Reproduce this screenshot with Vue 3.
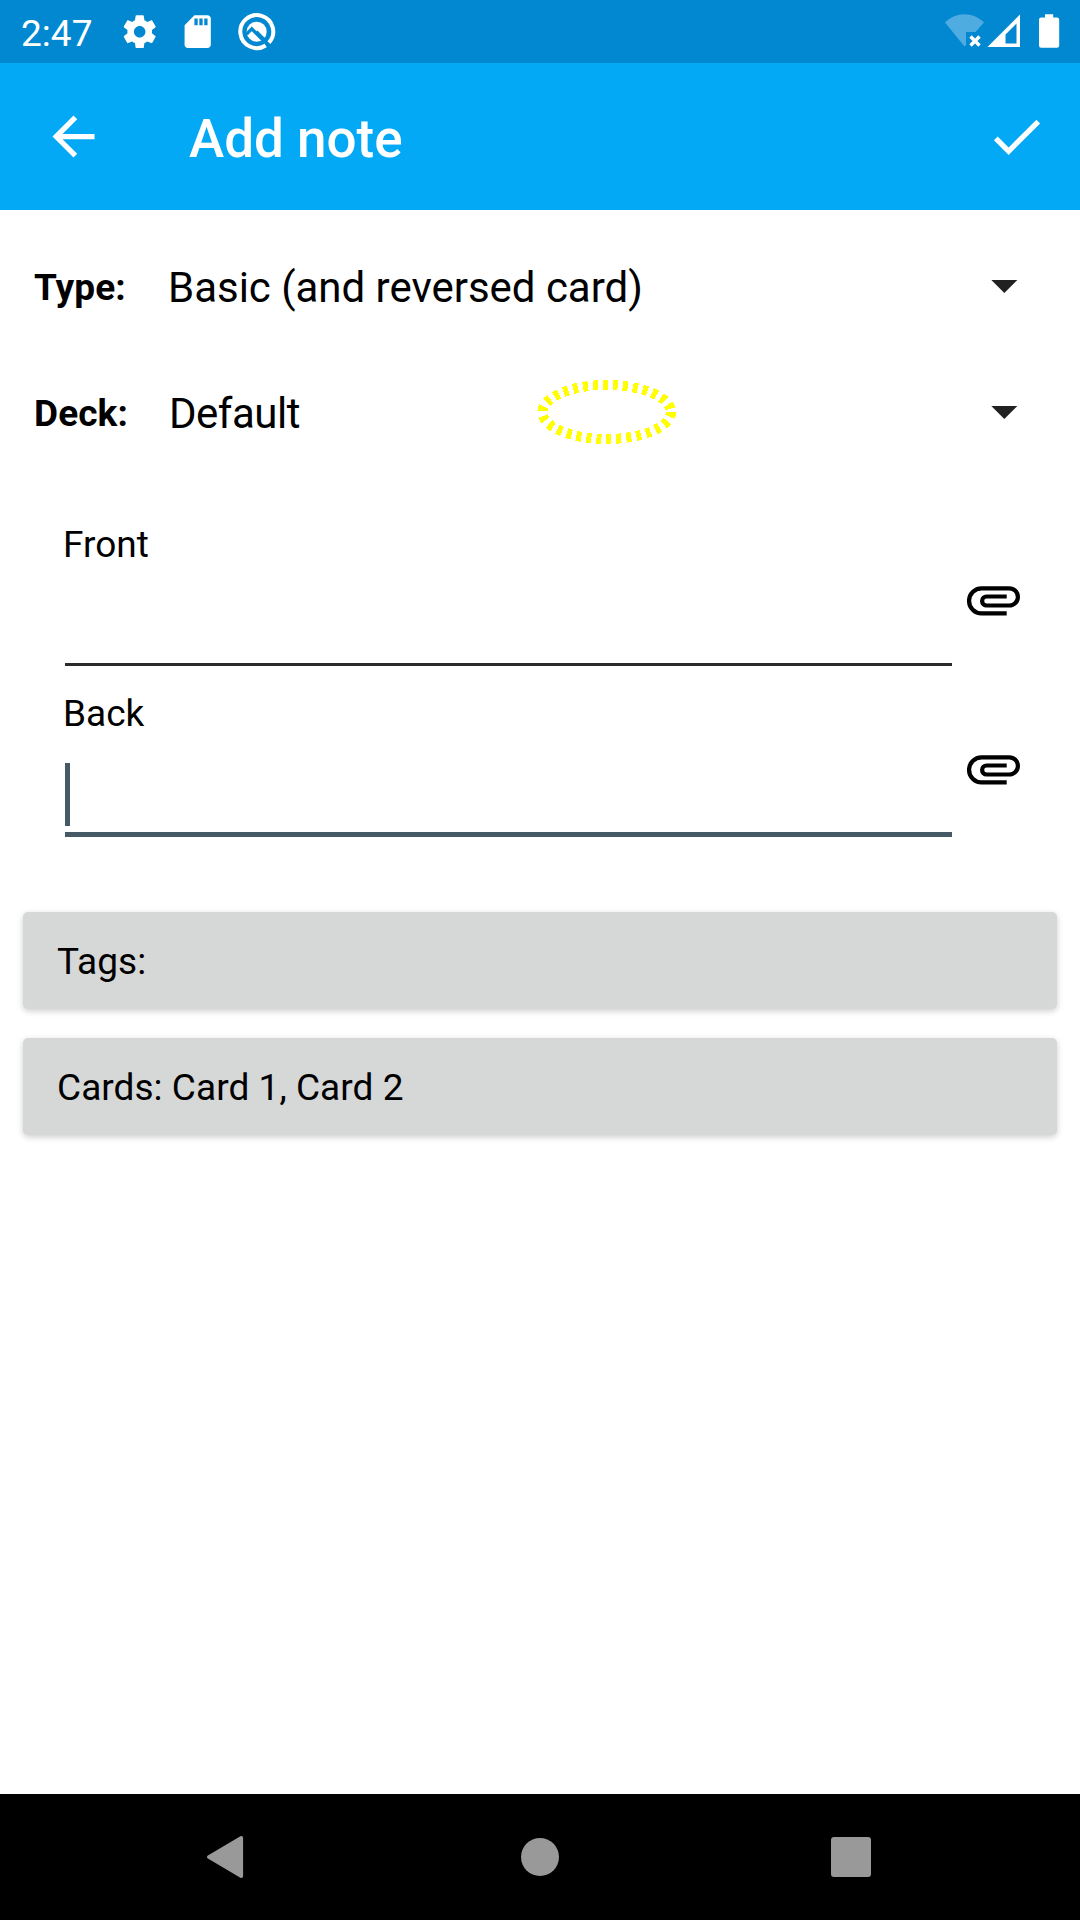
<script setup>
const selectors = [
  { label: 'Type:', value: 'Basic (and reversed card)', tight: false },
  { label: 'Deck:', value: 'Default', tight: true },
]
const fields = [
  { label: 'Front', focused: false },
  { label: 'Back', focused: true },
]
const actions = ['Tags:', 'Cards: Card 1, Card 2']
</script>

<template>
  <div class="screen">
    <header class="status">
      <span class="time">2:47</span>
      <div class="notifications">
        <svg class="note-icon" viewBox="0 0 24 24" fill="#fff">
          <path d="M19.430 12.980c.04-.32.07-.64.07-.98s-.03-.66-.07-.98l2.110-1.650c.19-.15.24-.42.12-.64l-2-3.460c-.12-.22-.39-.3-.61-.22l-2.490 1c-.52-.4-1.080-.73-1.690-.98l-.38-2.650C14.460 2.180 14.250 2 14 2h-4c-.25 0-.46.18-.49.42l-.38 2.650c-.61.25-1.170.59-1.690.98l-2.490-1c-.23-.09-.49 0-.61.22l-2 3.460c-.13.22-.07.49.12.64l2.110 1.650c-.04.32-.07.65-.07.98s.03.66.07.98l-2.110 1.650c-.19.15-.24.42-.12.64l2 3.460c.12.22.39.3.61.22l2.490-1c.52.4 1.080.73 1.690.98l.38 2.650c.03.24.24.42.49.42h4c.25 0 .46-.18.49-.42l.38-2.650c.61-.25 1.170-.59 1.690-.98l2.490 1c.23.09.49 0 .61-.22l2-3.460c.12-.22.07-.49-.12-.64l-2.110-1.650zM12 15.500c-1.930 0-3.500-1.570-3.500-3.500s1.570-3.500 3.500-3.500 3.500 1.570 3.500 3.500-1.570 3.500-3.500 3.500z" />
        </svg>
        <svg class="note-icon" viewBox="0 0 24 24" fill="#fff">
          <path d="M18 2h-8L4.020 8 4 20c0 1.100.9 2 2 2h12c1.100 0 2-.9 2-2V4c0-1.100-.9-2-2-2zm-6 6h-2V4h2v4zm3 0h-2V4h2v4zm3 0h-2V4h2v4z" />
        </svg>
        <svg class="note-icon" viewBox="0 0 39 39" fill="none">
          <path d="M28.400 33.100A16.300 16.300 0 1 1 31.600 30.400" stroke="#fff" stroke-width="4" />
          <circle cx="19.500" cy="19.500" r="9.900" fill="#fff" />
          <path d="M9.500 22L14.600 16.700L26 28.200" stroke="#0288d1" stroke-width="3.200" />
          <path d="M19 19.500L27 27.500" stroke="#0288d1" stroke-width="3.400" />
        </svg>
      </div>
      <svg class="system" width="120" height="40" viewBox="942 12 120 40">
        <path d="M945 22.500C956 11.500 973 11.500 984 22.500L975.500 32H966V45L964.500 46.500Z" fill="#4eace0" />
        <path d="M970.500 36.500L979.500 45.500M979.500 36.500L970.500 45.500" stroke="#fff" stroke-width="3.400" />
        <path d="M1020 14.500V47H987.500ZM1016.500 23.500L1005.500 34.500V43.500H1016.500Z" fill="#fff" fill-rule="evenodd" />
        <path d="M1045 14.300H1053.200V17.600H1057Q1059.200 17.600 1059.200 19.800V45.600Q1059.200 47.800 1057 47.800H1041.200Q1039 47.800 1039 45.600V19.800Q1039 17.600 1041.200 17.600H1045Z" fill="#fff" />
      </svg>
    </header>

    <div class="toolbar">
      <svg class="tool-icon" viewBox="0 0 24 24" fill="#fff">
        <path d="M20 11H7.830l5.590-5.590L12 4l-8 8 8 8 1.410-1.410L7.830 13H20v-2z" />
      </svg>
      <h1 class="title">Add note</h1>
      <svg class="tool-icon" viewBox="0 0 24 24" fill="#fff">
        <path d="M9 16.170L4.830 12l-1.420 1.410L9 19 21 7l-1.410-1.410z" />
      </svg>
    </div>

    <main class="content">
      <div v-for="s in selectors" :key="s.label" class="selector">
        <span class="selector-label">{{ s.label }}</span>
        <span class="selector-value" :class="{ tight: s.tight }">{{ s.value }}</span>
        <svg class="caret" width="27" height="13" viewBox="0 0 27 13">
          <path d="M0.300 0H26.300L13.300 13Z" fill="#212121" />
        </svg>
      </div>

      <svg class="marker" width="140" height="66" viewBox="537 379 140 66">
        <ellipse cx="606.700" cy="412" rx="64.300" ry="27" fill="none" stroke="#ff0" stroke-width="10" stroke-dasharray="5 5" shape-rendering="crispEdges" />
      </svg>

      <div class="fields">
        <div v-for="f in fields" :key="f.label" class="field">
          <div class="entry">
            <div class="field-label">{{ f.label }}</div>
            <div class="input" :class="{ focused: f.focused }">
              <span v-if="f.focused" class="cursor"></span>
            </div>
          </div>
          <svg class="clip" width="54" height="31" viewBox="967 585.800 54 31">
            <path d="M1006.700 613.200H981.600A12.550 12.550 0 0 1 981.600 588.100H1009.300A8.600 8.600 0 0 1 1009.300 605.300H986.600A4.500 4.500 0 0 1 986.600 596.300H1006.700" fill="none" stroke="#000" stroke-width="4.200" />
          </svg>
        </div>
      </div>

      <div class="actions">
        <div v-for="a in actions" :key="a" class="action">{{ a }}</div>
      </div>
    </main>

    <nav class="navbar">
      <svg width="40" height="44" viewBox="0 0 40 44">
        <path d="M3.800 22L36.300 2.800V41.200Z" fill="#999" stroke="#999" stroke-width="3.600" stroke-linejoin="round" />
      </svg>
      <span class="home"></span>
      <span class="recent"></span>
    </nav>
  </div>
</template>

<style>
body {
  background: #fff;
}
</style>

<style scoped>
.screen {
  width: 1080px;
  height: 1920px;
  display: flex;
  flex-direction: column;
  overflow: hidden;
  background: #fff;
  color: #000;
  font-family: Roboto, sans-serif;
  font-size: 37px;
  letter-spacing: 0.05px;
}
.status {
  height: 63px;
  display: flex;
  align-items: center;
  background: #0288d1;
  color: #fff;
  box-sizing: border-box;
  padding: 0 18px 0 21px;
}
.time {
  width: 99.2px;
  padding-top: 3px;
}
.notifications {
  display: flex;
  gap: 18.8px;
}
.note-icon {
  width: 39.4px;
  height: 39.4px;
}
.system {
  margin-left: auto;
}
.toolbar {
  height: 147px;
  display: flex;
  align-items: center;
  box-sizing: border-box;
  padding: 0 32px 0 42px;
  background: #03a9f4;
  color: #fff;
}
.tool-icon {
  width: 63px;
  height: 63px;
}
.title {
  flex: 1;
  margin: 0;
  padding: 5px 0 0 84px;
  font-size: 53px;
  line-height: 62px;
  font-weight: 500;
  letter-spacing: 0;
}
.content {
  flex: 1;
  position: relative;
  padding-top: 15px;
}
.selector {
  height: 126px;
  display: flex;
  align-items: center;
  box-sizing: border-box;
  padding: 0 62px 0 34px;
}
.selector-label {
  width: 134px;
  margin-bottom: 2px;
  font-weight: 700;
  letter-spacing: 0.1px;
}
.selector-value {
  flex: 1;
  margin-bottom: 2px;
  font-size: 42px;
  letter-spacing: -0.02px;
}
.selector-value.tight {
  padding-left: 1px;
  letter-spacing: -0.5px;
}
.caret {
  margin-bottom: 3px;
}
.marker {
  position: absolute;
  left: 537px;
  top: 169px;
}
.fields {
  padding: 43px 59px 0 63px;
}
.field {
  height: 169px;
  display: flex;
  justify-content: space-between;
}
.entry {
  width: 889px;
}
.field-label {
  height: 49px;
  line-height: 49px;
  letter-spacing: 0;
}
.input {
  height: 94px;
  margin-left: 2px;
  border-bottom: 3px solid #2b2b2b;
}
.input.focused {
  display: flex;
  border-bottom: 5px solid #455a64;
}
.cursor {
  width: 5px;
  height: 63px;
  margin-top: 25px;
  background: #455a64;
}
.clip {
  margin-top: 66px;
}
.actions {
  display: flex;
  flex-direction: column;
  gap: 29px;
  padding: 54px 23px 0;
}
.action {
  height: 97px;
  line-height: 100px;
  padding-left: 34px;
  border-radius: 5px;
  background: #d6d7d7;
  box-shadow: 0 2px 6px rgba(0, 0, 0, 0.2);
}
.navbar {
  height: 126px;
  display: flex;
  align-items: center;
  justify-content: space-between;
  box-sizing: border-box;
  padding: 0 209px 0 205px;
  background: #000;
}
.home {
  width: 38px;
  height: 38px;
  margin-left: 67px;
  margin-right: 63px;
  border-radius: 50%;
  background: #999;
}
.recent {
  width: 40px;
  height: 40px;
  border-radius: 3px;
  background: #999;
}
</style>
